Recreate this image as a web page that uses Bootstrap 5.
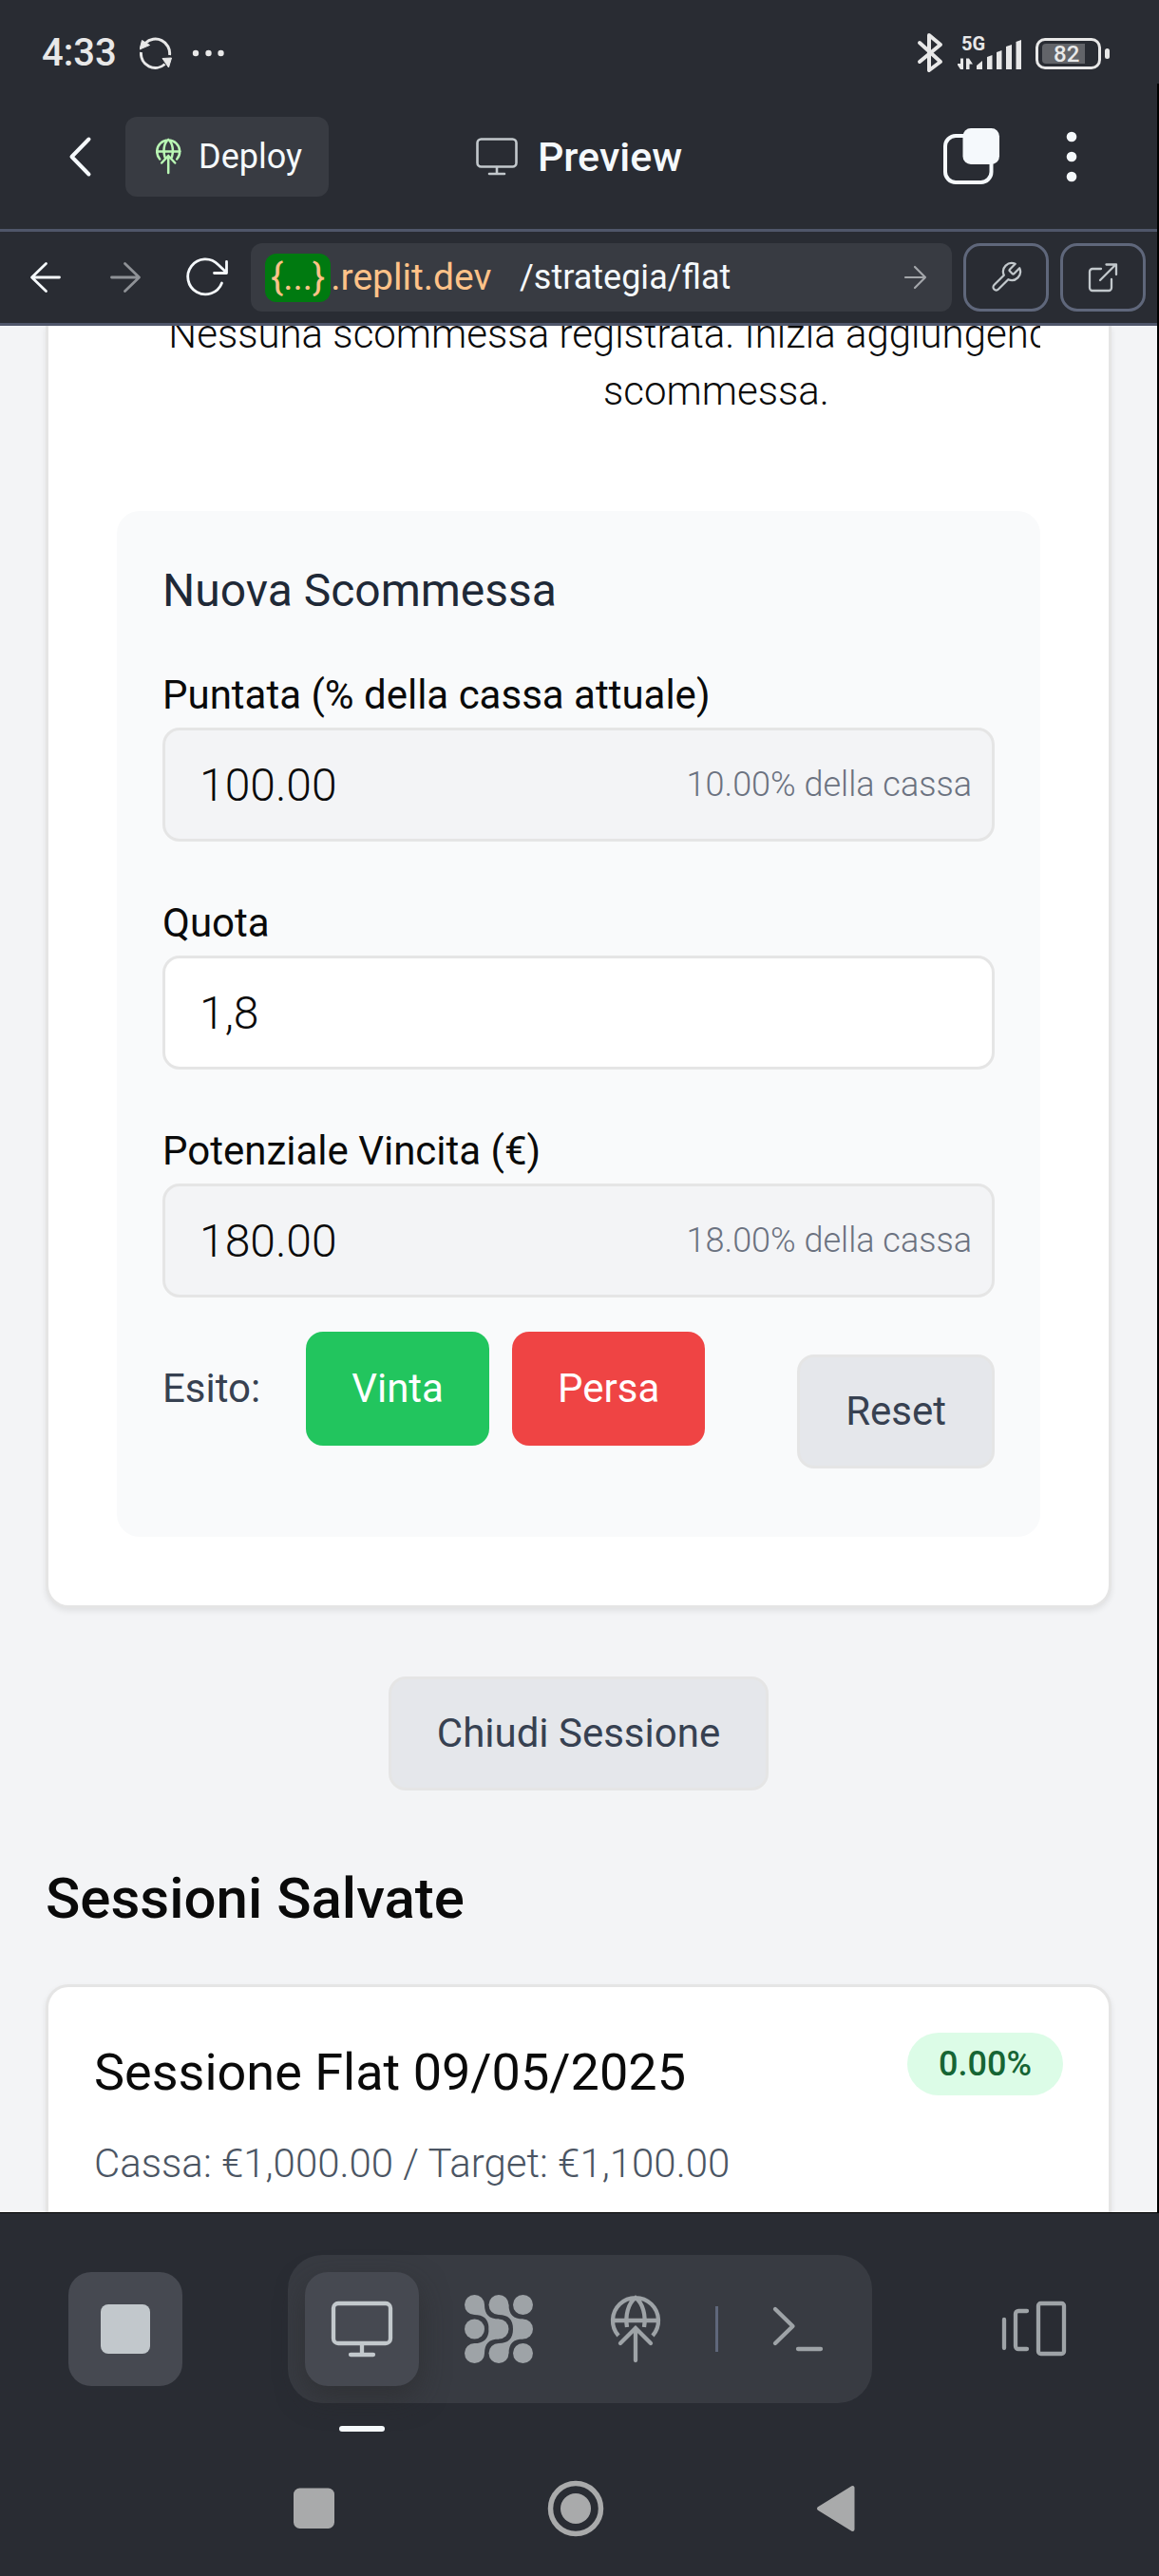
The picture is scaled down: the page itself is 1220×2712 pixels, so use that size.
<!DOCTYPE html>
<html lang="it">
<head>
<meta charset="utf-8">
<meta name="viewport" content="width=device-width, initial-scale=1">
<title>Preview – Strategia Flat</title>
<link href="https://cdn.jsdelivr.net/npm/bootstrap@5.3.0/dist/css/bootstrap.min.css" rel="stylesheet">
<style>
  :root { --chrome: #292c33; --raised: #383b42; --raised-2: #464951; --line: #4f566a; --ink: #f5f9fc; --muted-icon: #9ea3a7; --w-light: 330; --w-normal: 370; --w-medium: 480; }
  body { background: var(--chrome); color: #0a0a0a; font-family: Roboto, "Liberation Sans", sans-serif; font-size: 42px; line-height: 60px; font-weight: var(--w-light); }
  svg { display: block; flex: none; }
  .plain { background: none; border: 0; padding: 0; color: inherit; }

  /* status bar */
  .status-bar { height: 88px; padding: 24px 52px 0 44px; color: #e8e8e8; }
  .clock { font-size: 40px; line-height: 48px; font-weight: 500; }
  .net-label { font-size: 20px; line-height: 20px; font-weight: 700; }
  .battery { width: 69px; height: 33px; border: 3px solid #e8e8e8; border-radius: 10px; padding: 3px 4px; font-size: 24px; line-height: 24px; font-weight: 500; }
  .battery-level { height: 21px; width: 45px; background: #626469; border-radius: 4px 0 0 4px; padding-left: 12px; line-height: 22px; }
  .battery-tip { width: 5px; height: 11px; border-radius: 3px; background: #e8e8e8; }

  /* app header */
  .edge { border-right: 2px solid #000; }
  .app-header { height: 153px; padding: 0 84px; color: var(--ink); }
  .side { flex: 1 1 0; }
  .btn-back { margin-left: -12px; }
  .btn-deploy { height: 84px; padding: 0 28px 0 32px; border-radius: 12px; background: var(--raised); color: var(--ink); font-size: 36px; font-weight: 400; border: 0; }
  .screen-title { font-size: 43px; line-height: 60px; font-weight: 500; }

  /* address bar */
  .url-bar { height: 102px; padding: 0 12px 0 30px; gap: 12px; border-top: 3px solid var(--line); border-bottom: 3px solid var(--line); color: var(--ink); }
  .url-field { height: 72px; padding: 0 24px 0 15px; border-radius: 12px; background: var(--raised); min-width: 0; }
  .host { width: 244px; overflow: hidden; white-space: nowrap; color: #ffc288; font-size: 39px; line-height: 51px; font-weight: 400; text-decoration: none; }
  .host-token { background: #007a10; border-radius: 12px; padding: 0 6px; height: 51px; }
  .url-path { min-width: 0; background: none; border: 0; color: var(--ink); font-size: 36px; line-height: 51px; font-weight: 400; padding: 0; }
  .tools { gap: 12px; }
  .btn-tool { width: 90px; height: 72px; border: 3px solid #5f677b; border-radius: 18px; color: #c2c8cc; background: none; padding: 0; }

  /* page inside the preview */
  .webview { background: #f3f4f6; border-bottom: 1px solid #000; padding: 0 48px; overflow: hidden; }
  .panel-card { background: #fff; border: 3px solid #e5e5e5; border-radius: 24px; box-shadow: 0 3px 6px rgba(0,0,0,.08); }
  .panel-card.scrolled { border-top: 0; border-top-left-radius: 0; border-top-right-radius: 0; padding: 0 72px 72px; }
  .panel-card.continued { border-bottom: 0; border-bottom-left-radius: 0; border-bottom-right-radius: 0; padding: 48px 48px 21px; }
  .bets-scroll { overflow: hidden; padding-bottom: 96px; }
  .bets-empty { width: 1262px; margin: -21px 0 0; padding: 0 48px; text-align: center; }
  .bet-form { background: #f9fafb; border-radius: 24px; padding: 48px 48px 72px; }
  .bet-form h3 { font-size: 48px; line-height: 72px; font-weight: var(--w-normal); color: #1f2937; margin: 0 0 44px; }
  .bet-form label { display: block; font-weight: var(--w-normal); margin-bottom: 4px; }
  .field-group { margin-bottom: 56px; }
  .field-group.last { margin-bottom: 36px; }
  .form-control.bet-input { height: 120px; padding: 0 36px; border: 3px solid #e5e5e5; border-radius: 18px; font-size: 48px; line-height: 72px; font-weight: var(--w-light); color: #0a0a0a; background: #fff; }
  .form-control.bet-input[readonly] { background: #f3f4f6; }
  .suffix { right: 24px; font-size: 36px; line-height: 48px; color: #6b7280; }
  .btn.act { height: 120px; padding: 0 45px; border: 3px solid transparent; border-radius: 18px; font-size: 42px; font-weight: var(--w-normal); line-height: 60px; }
  .btn.act.win { background: #22c55e; color: #fff; }
  .btn.act.lose { background: #ef4444; color: #fff; }
  .btn.act.soft { background: #e5e7eb; border-color: #e5e5e5; color: #374151; padding: 0 48px; }
  .outcome { gap: 48px; color: #374151; font-weight: var(--w-normal); }
  .outcome-buttons { gap: 24px; }
  .reset-offset { margin-top: 24px; }
  .section-title { font-size: 60px; line-height: 84px; font-weight: var(--w-medium); margin: 0 0 48px; }
  .session-title { font-size: 54px; line-height: 84px; font-weight: var(--w-normal); margin: 0 0 24px; }
  .percent { background: #dcfce7; color: #166534; border-radius: 33px; font-size: 36px; line-height: 48px; font-weight: var(--w-medium); padding: 9px 33px; }
  .session-meta { color: #4b5563; margin: 0; }
  .gap-y { margin-top: 72px; margin-bottom: 72px; }

  /* bottom dock */
  .dock-row { padding: 44px 72px 0; color: #c2c8cc; }
  .dock { background: var(--raised); border-radius: 36px; padding: 18px; gap: 24px; color: var(--muted-icon); }
  .dock-btn { width: 120px; height: 120px; border: 0; background: none; padding: 0; border-radius: 24px; color: inherit; }
  .dock-btn.filled { background: var(--raised-2); color: #c2c8cc; }
  .dock-btn.active { box-shadow: 0 12px 30px rgba(40,40,40,.5); }
  .dock-btn.active::after { content: ""; position: absolute; left: 36px; bottom: -48px; width: 48px; height: 6px; border-radius: 3px; background: var(--ink); }
  .dock-split { width: 3px; height: 48px; background: #5f677b; }
  .sys-nav { padding: 81px 8px 41px 0; gap: 215px; color: #a9aaab; }
</style>
</head>
<body>

<div class="status-bar d-flex justify-content-between align-items-center">
  <div class="d-flex align-items-center gap-4">
    <span class="clock">4:33</span>
    <svg width="92" height="36" viewBox="147 37 92 36" fill="none" stroke="#e8e8e8" stroke-width="3">
      <path d="M148.500 54a15 15 0 0 0 25 12.500M178.500 57A15 15 0 0 0 153 44.500"/>
      <path d="M149.500 41.500 147 51l10.500-4.500zM171 60.500l9.500-.500-3 10z" fill="#e8e8e8" stroke="#e8e8e8" stroke-width="1"/>
      <g fill="#e8e8e8" stroke="none"><circle cx="206" cy="55" r="3.200"/><circle cx="219.500" cy="55" r="3.200"/><circle cx="232.500" cy="55" r="3.200"/></g>
    </svg>
  </div>
  <div class="d-flex align-items-center">
    <svg width="44" height="44" viewBox="966 33 44 44" fill="none" stroke="#e8e8e8" stroke-width="4" stroke-linejoin="round" stroke-linecap="round"><path d="M970 44 992 64 980 73V36l12 10-22 18"/></svg>
    <div class="position-relative">
      <span class="net-label position-absolute top-0 start-0 ms-1">5G</span>
      <svg width="82" height="40" viewBox="1010 34 82 40" fill="#e8e8e8"><path d="M1016 59.500V71h-3l-4-6h4v-5.500zM1019 71V59.500h3l4 6h-3.500V71zM1030 71v-4l6-5v9zM1041 71V58l5.500-2v15zM1051 71V53l5.500-2v20zM1061 71V47l6-2v26zM1071.500 71V42l5.500-2v31z"/></svg>
    </div>
    <div class="battery"><div class="battery-level">82</div></div>
    <div class="battery-tip ms-1"></div>
  </div>
</div>

<div class="edge">
<header class="app-header d-flex align-items-center">
  <div class="side d-flex align-items-center">
    <button class="plain btn-back" aria-label="Indietro"><svg width="60" height="48" viewBox="72 141 60 48" fill="none" stroke="currentColor" stroke-width="4" stroke-linecap="round" stroke-linejoin="round"><path d="M93.500 146.500 75.500 165l18 18.500"/></svg></button>
    <button class="btn-deploy d-flex align-items-center">
      <svg width="45" height="42" viewBox="4 2 45 42" fill="none" stroke="#b9f7b4" stroke-width="2.500" stroke-linecap="round"><path d="M8.200 25.500a12 12 0 1 1 18 0M5 17.500h24.500M13.500 23.500c-2-7-1-15 3.700-18.500 4.700 3.500 5.700 11.500 3.700 18.500M17.200 40V22.500m-7 7 7-7.500 7 7.500"/></svg>
      <span>Deploy</span>
    </button>
  </div>
  <div class="d-flex align-items-center">
    <svg width="66" height="44" viewBox="500 143 66 44" fill="none" stroke="#c2c8cc" stroke-width="2.600" stroke-linecap="round"><rect x="502.500" y="146.500" width="41" height="29" rx="4"/><path d="M523 176v6M515 183h16"/></svg>
    <h1 class="screen-title m-0">Preview</h1>
  </div>
  <div class="side d-flex align-items-center justify-content-end">
    <button class="plain" aria-label="Schede"><svg width="130" height="60" viewBox="992 135 130 60"><rect x="995" y="143" width="48.500" height="49" rx="11" fill="none" stroke="currentColor" stroke-width="4"/><rect x="1013.500" y="135" width="38.500" height="38" rx="8.500" fill="currentColor"/></svg></button>
    <button class="plain" aria-label="Altro"><svg width="12" height="60" viewBox="1122 135 12 60" fill="currentColor"><circle cx="1128" cy="144" r="5.300"/><circle cx="1128" cy="165" r="5.300"/><circle cx="1128" cy="186" r="5.300"/></svg></button>
  </div>
</header>

<nav class="url-bar d-flex align-items-center" aria-label="Navigazione">
  <div class="d-flex align-items-center flex-shrink-0">
    <button class="plain" aria-label="Pagina precedente"><svg width="84" height="48" viewBox="30 268 84 48" fill="none" stroke="currentColor" stroke-width="2.800" stroke-linecap="round" stroke-linejoin="round"><path d="M62.500 292H34m14.500-14.500L33.500 292l15 14.500"/></svg></button>
    <button class="plain" aria-label="Pagina successiva"><svg width="78" height="48" viewBox="114 268 78 48" fill="none" stroke="#8f9297" stroke-width="2.800" stroke-linecap="round" stroke-linejoin="round"><path d="M117.500 292H146m-14.500-14.500 15 14.500-15 14.500"/></svg></button>
    <button class="plain" aria-label="Ricarica"><svg width="60" height="48" viewBox="192 268 60 48" fill="none" stroke="currentColor" stroke-width="2.800" stroke-linecap="round" stroke-linejoin="round"><path d="M233.500 298a18.500 18.500 0 1 1-4-19.500l9 8.500m0-11.500v12h-13"/></svg></button>
  </div>
  <div class="url-field d-flex align-items-center flex-fill">
    <a class="host d-flex flex-shrink-0" href="#"><span class="host-token">{...}</span><span>.replit.dev</span></a>
    <input class="url-path flex-fill ms-4" type="text" value="/strategia/flat" aria-label="Percorso">
    <svg width="28" height="30" viewBox="950 277 28 30" fill="none" stroke="#a3a6aa" stroke-width="2.200" stroke-linecap="round" stroke-linejoin="round"><path d="M953 292h21m-11-11 11 11-11 11"/></svg>
  </div>
  <div class="tools d-flex flex-shrink-0">
    <button class="btn-tool d-flex align-items-center justify-content-center" aria-label="Strumenti"><svg width="36" height="36" viewBox="0 0 24 24" fill="none" stroke="currentColor" stroke-width="1.500" stroke-linecap="round" stroke-linejoin="round"><path d="M14.700 6.300a1 1 0 0 0 0 1.400l1.600 1.600a1 1 0 0 0 1.400 0l3.770-3.770a6 6 0 0 1-7.940 7.940l-6.910 6.910a2.120 2.120 0 0 1-3-3l6.910-6.910a6 6 0 0 1 7.940-7.940l-3.760 3.760z"/></svg></button>
    <button class="btn-tool d-flex align-items-center justify-content-center" aria-label="Apri in una nuova scheda"><svg width="36" height="36" viewBox="1143 274 36 36" fill="none" stroke="currentColor" stroke-width="2.300" stroke-linecap="round" stroke-linejoin="round"><path d="M1159 283h-9a3 3 0 0 0-3 3v17a3 3 0 0 0 3 3h17a3 3 0 0 0 3-3v-9M1164.500 278.500h10.500v10.500M1158 295l16.500-16.500"/></svg></button>
  </div>
</nav>

<main class="webview">
  <section class="panel-card scrolled">
    <div class="bets-scroll">
      <p class="bets-empty">Nessuna scommessa registrata. Inizia aggiungendo una nuova scommessa.</p>
    </div>
    <form class="bet-form">
      <h3>Nuova Scommessa</h3>
      <div class="field-group">
        <label for="stake">Puntata (% della cassa attuale)</label>
        <div class="position-relative d-flex align-items-center">
          <input id="stake" class="form-control bet-input" type="text" value="100.00" readonly>
          <span class="suffix position-absolute">10.00% della cassa</span>
        </div>
      </div>
      <div class="field-group">
        <label for="odds">Quota</label>
        <input id="odds" class="form-control bet-input" type="text" inputmode="decimal" value="1,8">
      </div>
      <div class="field-group last">
        <label for="payout">Potenziale Vincita (€)</label>
        <div class="position-relative d-flex align-items-center">
          <input id="payout" class="form-control bet-input" type="text" value="180.00" readonly>
          <span class="suffix position-absolute">18.00% della cassa</span>
        </div>
      </div>
      <div class="d-flex justify-content-between align-items-start">
        <div class="outcome d-flex align-items-center">
          <span>Esito:</span>
          <div class="outcome-buttons d-flex">
            <button type="button" class="btn act win">Vinta</button>
            <button type="button" class="btn act lose">Persa</button>
          </div>
        </div>
        <button type="reset" class="btn act soft reset-offset">Reset</button>
      </div>
    </form>
  </section>

  <div class="gap-y d-flex justify-content-center">
    <button type="button" class="btn act soft">Chiudi Sessione</button>
  </div>

  <h2 class="section-title">Sessioni Salvate</h2>
  <article class="panel-card continued">
    <div class="d-flex justify-content-between align-items-start">
      <h3 class="session-title">Sessione Flat 09/05/2025</h3>
      <span class="percent">0.00%</span>
    </div>
    <p class="session-meta">Cassa: €1,000.00 / Target: €1,100.00</p>
  </article>
</main>
</div>

<footer>
  <div class="dock-row d-flex justify-content-between align-items-center">
    <button class="dock-btn filled d-flex align-items-center justify-content-center" aria-label="Ferma"><svg width="54" height="54" viewBox="0 0 54 54"><rect x="1" y="1" width="52" height="52" rx="8" fill="currentColor"/></svg></button>
    <div class="dock d-flex align-items-center">
      <button class="dock-btn filled active position-relative d-flex align-items-center justify-content-center" aria-label="Preview"><svg width="72" height="72" viewBox="345 2416 72 72" fill="none" stroke="currentColor" stroke-width="4.300" stroke-linecap="round" stroke-linejoin="round"><rect x="351" y="2425" width="60" height="42" rx="5"/><path d="M381 2468v10M369 2479h24"/></svg></button>
      <button class="dock-btn d-flex align-items-center justify-content-center" aria-label="Agent"><svg width="72" height="72" viewBox="489 2416 72 72" fill="currentColor">
        <circle cx="499.500" cy="2426.500" r="10.500"/><circle cx="525" cy="2426.500" r="10.500"/><circle cx="550.500" cy="2426.500" r="10.500"/>
        <circle cx="499.500" cy="2452" r="10.500"/><circle cx="525" cy="2452" r="10.500"/><circle cx="550.500" cy="2452" r="10.500"/>
        <circle cx="499.500" cy="2477.500" r="10.500"/><circle cx="525" cy="2477.500" r="10.500"/><circle cx="550.500" cy="2477.500" r="10.500"/>
        <path d="M510 2426.500c0 10 5 15 15 15v21c-10 0-15 5-15 15l-10.500-10.500c10 0 15-5 15-15s-5-15-15-15z"/>
        <path d="M535.500 2426.500c0 10 5 15 15 15v21c-10 0-15 5-15 15l-10.500-10.500c10 0 15-5 15-15s-5-15-15-15z"/>
      </svg></button>
      <button class="dock-btn d-flex align-items-center justify-content-center" aria-label="Deploy"><svg width="72" height="72" viewBox="633 2416 72 72" fill="none" stroke="currentColor" stroke-width="4.300"><path d="M651 2459a24 24 0 1 1 36 0M644 2443h50M660 2450c-2-12 1-25 9-31 8 6 11 19 9 31"/><path d="M669 2485v-34m-16 16 16-16 16 16" stroke-linecap="round"/></svg></button>
      <span class="dock-split"></span>
      <button class="dock-btn d-flex align-items-center justify-content-center" aria-label="Shell"><svg width="72" height="72" viewBox="804 2416 72 72" fill="none" stroke="currentColor" stroke-width="4.300" stroke-linecap="round" stroke-linejoin="round"><path d="m816 2431 18.500 18-18.500 18M840 2473h24"/></svg></button>
    </div>
    <button class="dock-btn d-flex align-items-center justify-content-center" aria-label="Tutte le schede"><svg width="72" height="72" viewBox="1052 2416 72 72" fill="none" stroke="var(--muted-icon)" stroke-width="4.300" stroke-linecap="round" stroke-linejoin="round"><path d="M1057 2442v30M1081 2433h-9a3 3 0 0 0-3 3v34a3 3 0 0 0 3 3h9"/><rect x="1093" y="2425" width="27" height="53" rx="2.500"/></svg></button>
  </div>
  <div class="sys-nav d-flex justify-content-center">
    <button class="plain" aria-label="App recenti"><svg width="60" height="60" viewBox="301 2611 60 60" fill="currentColor"><rect x="309" y="2619.500" width="43" height="42.500" rx="6.500"/></svg></button>
    <button class="plain" aria-label="Home"><svg width="60" height="60" viewBox="576 2611 60 60" fill="currentColor"><circle cx="606" cy="2641" r="16"/><circle cx="606" cy="2641" r="26.500" fill="none" stroke="currentColor" stroke-width="5.500"/></svg></button>
    <button class="plain" aria-label="Indietro di sistema"><svg width="60" height="60" viewBox="851 2611 60 60" fill="currentColor" stroke="currentColor" stroke-width="4" stroke-linejoin="round"><path d="M862 2641 897.500 2619v44z"/></svg></button>
  </div>
</footer>
<script src="https://cdn.jsdelivr.net/npm/bootstrap@5.3.0/dist/js/bootstrap.bundle.min.js"></script>
</body>
</html>
